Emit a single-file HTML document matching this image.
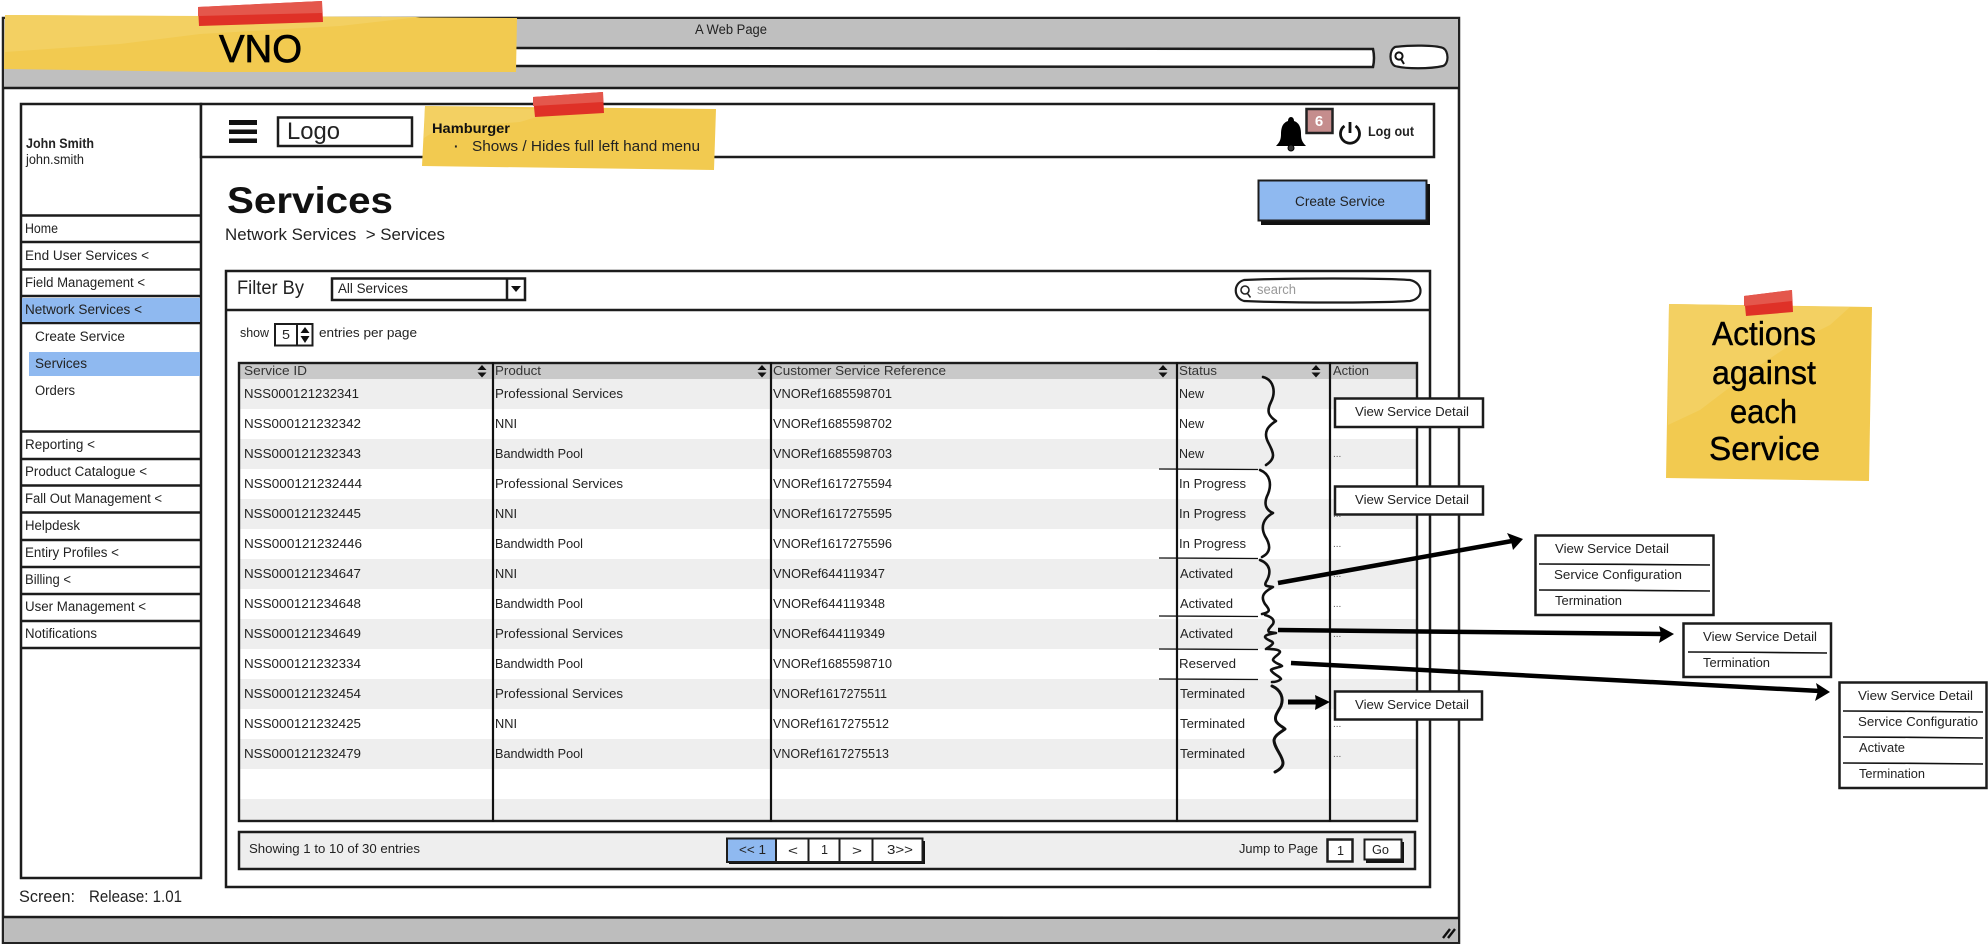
<!DOCTYPE html>
<html><head><meta charset="utf-8"><title>VNO Services</title>
<style>
html,body{margin:0;padding:0;background:#fff;width:1988px;height:944px;overflow:hidden}
svg{display:block}
text{font-family:"Liberation Sans",sans-serif;fill:#222}
.m{font-size:13.5px}
.t{font-size:13px}
.h{font-size:13px;fill:#333}
.d{font-size:10px;fill:#555}
.b{font-weight:bold}
.ln{fill:none;stroke:#1c1c1c;stroke-width:2.5}
.br{fill:none;stroke:#111;stroke-width:2.6;stroke-linejoin:round;stroke-linecap:round}
.sep{fill:none;stroke:#111;stroke-width:1.3}
.box{fill:#fff;stroke:#1c1c1c;stroke-width:2.5}
.ar{fill:none;stroke:#000;stroke-width:4.5}
.st{fill:#000;stroke:#000;stroke-width:.7}
</style></head><body>
<svg width="1988" height="944" viewBox="0 0 1988 944" xmlns="http://www.w3.org/2000/svg">
<rect width="1988" height="944" fill="#fff"/>
<!-- window -->
<rect x="3" y="18" width="1456" height="925" fill="#fff" stroke="#222" stroke-width="2.5"/>
<rect x="4" y="19" width="1454" height="69" fill="#bfbfbf"/>
<path d="M3 88H1459" class="ln"/>
<rect x="4" y="918" width="1454" height="24" fill="#bdbdbd"/>
<path d="M3 917C500 918 1000 916 1459 918" class="ln"/>
<path d="M1443 938l7-9M1448 938l7-9" stroke="#111" stroke-width="2.4" fill="none"/>
<text x="695" y="34" class="m" font-size="13" textLength="72" lengthAdjust="spacingAndGlyphs">A Web Page</text>
<path d="M500 48C800 47 1100 49 1373 49Q1375 58 1373 67C1100 68 800 67 500 66Z" fill="#fff" stroke="#1c1c1c" stroke-width="2.5"/>
<path d="M1395 47C1410 45 1435 45 1443 48C1449 51 1449 64 1443 66C1430 69 1405 69 1395 66C1389 63 1389 50 1395 47Z" fill="#fff" stroke="#1c1c1c" stroke-width="2.2"/>
<circle cx="1399" cy="56" r="3.6" fill="none" stroke="#111" stroke-width="2"/><path d="M1401 59l3 5" stroke="#111" stroke-width="2"/>

<!-- sidebar -->
<rect x="21" y="104" width="180" height="774" class="box"/>
<path d="M21 215.500H201M21 242H201M21 269.500H201M21 296H201M21 323H201M21 431.500H201M21 459H201M21 485.500H201M21 512.500H201M21 540H201M21 567H201M21 594H201M21 621H201M21 648H201" class="ln"/>
<rect x="22" y="298" width="178" height="24" fill="#8fb9f0"/>
<rect x="29" y="352" width="171" height="24" fill="#8fb9f0"/>
<text x="26" y="148" class="m b" font-size="13" textLength="68" lengthAdjust="spacingAndGlyphs">John Smith</text>
<text x="26" y="164" class="m" textLength="58" lengthAdjust="spacingAndGlyphs">john.smith</text>
<text x="25" y="233" class="m" textLength="33" lengthAdjust="spacingAndGlyphs">Home</text>
<text x="25" y="260" class="m" textLength="124" lengthAdjust="spacingAndGlyphs">End User Services &lt;</text>
<text x="25" y="287" class="m" textLength="120" lengthAdjust="spacingAndGlyphs">Field Management &lt;</text>
<text x="25" y="314" class="m" textLength="117" lengthAdjust="spacingAndGlyphs">Network Services &lt;</text>
<text x="35" y="341" class="m" textLength="90" lengthAdjust="spacingAndGlyphs">Create Service</text>
<text x="35" y="368" class="m" textLength="52" lengthAdjust="spacingAndGlyphs">Services</text>
<text x="35" y="395" class="m" textLength="40" lengthAdjust="spacingAndGlyphs">Orders</text>
<text x="25" y="449" class="m" textLength="70" lengthAdjust="spacingAndGlyphs">Reporting &lt;</text>
<text x="25" y="476" class="m" textLength="122" lengthAdjust="spacingAndGlyphs">Product Catalogue &lt;</text>
<text x="25" y="503" class="m" textLength="137" lengthAdjust="spacingAndGlyphs">Fall Out Management &lt;</text>
<text x="25" y="530" class="m" textLength="55" lengthAdjust="spacingAndGlyphs">Helpdesk</text>
<text x="25" y="557" class="m" textLength="94" lengthAdjust="spacingAndGlyphs">Entiry Profiles &lt;</text>
<text x="25" y="584" class="m" textLength="46" lengthAdjust="spacingAndGlyphs">Billing &lt;</text>
<text x="25" y="611" class="m" textLength="121" lengthAdjust="spacingAndGlyphs">User Management &lt;</text>
<text x="25" y="638" class="m" textLength="72" lengthAdjust="spacingAndGlyphs">Notifications</text>
<text x="19" y="902" font-size="17" textLength="56" lengthAdjust="spacingAndGlyphs">Screen:</text>
<text x="89" y="902" font-size="17" textLength="93" lengthAdjust="spacingAndGlyphs">Release: 1.01</text>

<!-- header -->
<rect x="201" y="104" width="1233" height="53" class="box"/>
<path d="M229 120h28v5h-28zM229 129.500h28v4.500h-28zM229 138.500h28v4.500h-28z" fill="#111"/>
<rect x="278" y="117.500" width="134" height="28.500" class="box"/>
<text x="287" y="139" font-size="24" textLength="53" lengthAdjust="spacingAndGlyphs">Logo</text>
<path d="M1291 117c2 0 3 2 3 4c6 2 7 8 7 13c0 5 1 8 5 12h-30c4-4 5-7 5-12c0-5 1-11 7-13c0-2 1-4 3-4z" fill="#000"/>
<circle cx="1291" cy="148" r="3" fill="#333" stroke="#000"/>
<rect x="1306.500" y="109" width="26" height="24" fill="#c58d8d" stroke="#222" stroke-width="2.5"/>
<text x="1319" y="126" font-size="15" font-weight="bold" text-anchor="middle" style="fill:#fff">6</text>
<path d="M1344.500 126A9.500 9.500 0 1 0 1355.500 126M1350 122V133" fill="none" stroke="#111" stroke-width="2.8"/>
<text x="1368" y="136" class="m b" font-size="13" textLength="46" lengthAdjust="spacingAndGlyphs">Log out</text>

<!-- page heading -->
<text x="227" y="213" font-size="37" font-weight="bold" textLength="166" lengthAdjust="spacingAndGlyphs" style="fill:#111">Services</text>
<text x="225" y="240" font-size="17" textLength="220" lengthAdjust="spacingAndGlyphs" xml:space="preserve">Network Services  &gt; Services</text>
<rect x="1261" y="184" width="169" height="41" fill="#111"/>
<rect x="1258.500" y="180.500" width="168" height="40" fill="#8fb9f0" stroke="#1c1c1c" stroke-width="2"/>
<text x="1295" y="206" class="m" textLength="90" lengthAdjust="spacingAndGlyphs">Create Service</text>

<!-- main panel -->
<rect x="226" y="271" width="1204" height="616" class="box"/>
<path d="M226 310H1431" class="ln"/>
<text x="237" y="294" font-size="19" textLength="67" lengthAdjust="spacingAndGlyphs">Filter By</text>
<rect x="332" y="278.500" width="193" height="21.500" class="box"/>
<path d="M507 278V300" class="ln"/>
<path d="M511 286h10l-5 6z" fill="#111"/>
<text x="338" y="293" class="m" textLength="70" lengthAdjust="spacingAndGlyphs">All Services</text>
<path d="M1244 280C1290 278 1380 278 1410 280C1424 283 1424 299 1410 301C1380 303 1290 303 1244 301C1233 298 1233 283 1244 280Z" fill="#fff" stroke="#1c1c1c" stroke-width="2.2"/>
<circle cx="1245" cy="290" r="4" fill="none" stroke="#222" stroke-width="1.6"/><path d="M1247.500 293.500l3 4" stroke="#222" stroke-width="1.6"/>
<text x="1257" y="294" class="m" font-size="13" textLength="39" lengthAdjust="spacingAndGlyphs" style="fill:#999">search</text>

<text x="240" y="337" class="t" textLength="29" lengthAdjust="spacingAndGlyphs">show</text>
<rect x="275" y="324" width="37.500" height="21.500" fill="#fff" stroke="#1c1c1c" stroke-width="2"/>
<path d="M297 324V345" stroke="#1c1c1c" stroke-width="2"/>
<path d="M300.500 333l4.500-6 4.500 6zM300.500 336h9l-4.500 7z" fill="#111"/>
<text x="282" y="339" class="t" textLength="8" lengthAdjust="spacingAndGlyphs">5</text>
<text x="319" y="337" class="t" textLength="98" lengthAdjust="spacingAndGlyphs">entries per page</text>

<!-- table -->
<rect x="239" y="364" width="1178" height="457" fill="#fff"/>
<rect x="239" y="364" width="1178" height="15" fill="#c9c9c9"/>
<g fill="#eeeeee">
<rect x="239" y="379" width="1178" height="30"/><rect x="239" y="439" width="1178" height="30"/><rect x="239" y="499" width="1178" height="30"/><rect x="239" y="559" width="1178" height="30"/><rect x="239" y="619" width="1178" height="30"/><rect x="239" y="679" width="1178" height="30"/><rect x="239" y="739" width="1178" height="30"/><rect x="239" y="799" width="1178" height="22"/>
</g>
<rect x="239" y="363" width="1178" height="458" fill="none" stroke="#1c1c1c" stroke-width="2.4"/>
<path d="M493 362V822M771 362V822M1177 362V822M1330 362V822" stroke="#111" stroke-width="2.2"/>
<g fill="#111">
<path d="M477.500 370l4.500-5 4.500 5zM477.500 372.500h9l-4.500 5z"/>
<path d="M757.500 370l4.500-5 4.500 5zM757.500 372.500h9l-4.500 5z"/>
<path d="M1158.500 370l4.500-5 4.500 5zM1158.500 372.500h9l-4.500 5z"/>
<path d="M1311.500 370l4.500-5 4.500 5zM1311.500 372.500h9l-4.500 5z"/>
</g>
<text x="244" y="375" class="h" textLength="63" lengthAdjust="spacingAndGlyphs">Service ID</text>
<text x="495" y="375" class="h" textLength="46" lengthAdjust="spacingAndGlyphs">Product</text>
<text x="773" y="375" class="h" textLength="173" lengthAdjust="spacingAndGlyphs">Customer Service Reference</text>
<text x="1179" y="375" class="h" textLength="38" lengthAdjust="spacingAndGlyphs">Status</text>
<text x="1333" y="375" class="h" textLength="36" lengthAdjust="spacingAndGlyphs">Action</text>

<g class="rows">
<text x="244" y="398" class="t" textLength="115" lengthAdjust="spacingAndGlyphs">NSS000121232341</text><text x="495" y="398" class="t" textLength="128" lengthAdjust="spacingAndGlyphs">Professional Services</text><text x="773" y="398" class="t" textLength="119" lengthAdjust="spacingAndGlyphs">VNORef1685598701</text><text x="1179" y="398" class="t" textLength="25" lengthAdjust="spacingAndGlyphs">New</text>
<text x="244" y="428" class="t" textLength="117" lengthAdjust="spacingAndGlyphs">NSS000121232342</text><text x="495" y="428" class="t" textLength="22" lengthAdjust="spacingAndGlyphs">NNI</text><text x="773" y="428" class="t" textLength="119" lengthAdjust="spacingAndGlyphs">VNORef1685598702</text><text x="1179" y="428" class="t" textLength="25" lengthAdjust="spacingAndGlyphs">New</text>
<text x="244" y="458" class="t" textLength="117" lengthAdjust="spacingAndGlyphs">NSS000121232343</text><text x="495" y="458" class="t" textLength="88" lengthAdjust="spacingAndGlyphs">Bandwidth Pool</text><text x="773" y="458" class="t" textLength="119" lengthAdjust="spacingAndGlyphs">VNORef1685598703</text><text x="1179" y="458" class="t" textLength="25" lengthAdjust="spacingAndGlyphs">New</text>
<text x="244" y="488" class="t" textLength="118" lengthAdjust="spacingAndGlyphs">NSS000121232444</text><text x="495" y="488" class="t" textLength="128" lengthAdjust="spacingAndGlyphs">Professional Services</text><text x="773" y="488" class="t" textLength="119" lengthAdjust="spacingAndGlyphs">VNORef1617275594</text><text x="1179" y="488" class="t" textLength="67" lengthAdjust="spacingAndGlyphs">In Progress</text>
<text x="244" y="518" class="t" textLength="117" lengthAdjust="spacingAndGlyphs">NSS000121232445</text><text x="495" y="518" class="t" textLength="22" lengthAdjust="spacingAndGlyphs">NNI</text><text x="773" y="518" class="t" textLength="119" lengthAdjust="spacingAndGlyphs">VNORef1617275595</text><text x="1179" y="518" class="t" textLength="67" lengthAdjust="spacingAndGlyphs">In Progress</text>
<text x="244" y="548" class="t" textLength="118" lengthAdjust="spacingAndGlyphs">NSS000121232446</text><text x="495" y="548" class="t" textLength="88" lengthAdjust="spacingAndGlyphs">Bandwidth Pool</text><text x="773" y="548" class="t" textLength="119" lengthAdjust="spacingAndGlyphs">VNORef1617275596</text><text x="1179" y="548" class="t" textLength="67" lengthAdjust="spacingAndGlyphs">In Progress</text>
<text x="244" y="578" class="t" textLength="117" lengthAdjust="spacingAndGlyphs">NSS000121234647</text><text x="495" y="578" class="t" textLength="22" lengthAdjust="spacingAndGlyphs">NNI</text><text x="773" y="578" class="t" textLength="112" lengthAdjust="spacingAndGlyphs">VNORef644119347</text><text x="1180" y="578" class="t" textLength="53" lengthAdjust="spacingAndGlyphs">Activated</text>
<text x="244" y="608" class="t" textLength="117" lengthAdjust="spacingAndGlyphs">NSS000121234648</text><text x="495" y="608" class="t" textLength="88" lengthAdjust="spacingAndGlyphs">Bandwidth Pool</text><text x="773" y="608" class="t" textLength="112" lengthAdjust="spacingAndGlyphs">VNORef644119348</text><text x="1180" y="608" class="t" textLength="53" lengthAdjust="spacingAndGlyphs">Activated</text>
<text x="244" y="638" class="t" textLength="117" lengthAdjust="spacingAndGlyphs">NSS000121234649</text><text x="495" y="638" class="t" textLength="128" lengthAdjust="spacingAndGlyphs">Professional Services</text><text x="773" y="638" class="t" textLength="112" lengthAdjust="spacingAndGlyphs">VNORef644119349</text><text x="1180" y="638" class="t" textLength="53" lengthAdjust="spacingAndGlyphs">Activated</text>
<text x="244" y="668" class="t" textLength="117" lengthAdjust="spacingAndGlyphs">NSS000121232334</text><text x="495" y="668" class="t" textLength="88" lengthAdjust="spacingAndGlyphs">Bandwidth Pool</text><text x="773" y="668" class="t" textLength="119" lengthAdjust="spacingAndGlyphs">VNORef1685598710</text><text x="1179" y="668" class="t" textLength="57" lengthAdjust="spacingAndGlyphs">Reserved</text>
<text x="244" y="698" class="t" textLength="117" lengthAdjust="spacingAndGlyphs">NSS000121232454</text><text x="495" y="698" class="t" textLength="128" lengthAdjust="spacingAndGlyphs">Professional Services</text><text x="773" y="698" class="t" textLength="114" lengthAdjust="spacingAndGlyphs">VNORef1617275511</text><text x="1180" y="698" class="t" textLength="65" lengthAdjust="spacingAndGlyphs">Terminated</text>
<text x="244" y="728" class="t" textLength="117" lengthAdjust="spacingAndGlyphs">NSS000121232425</text><text x="495" y="728" class="t" textLength="22" lengthAdjust="spacingAndGlyphs">NNI</text><text x="773" y="728" class="t" textLength="116" lengthAdjust="spacingAndGlyphs">VNORef1617275512</text><text x="1180" y="728" class="t" textLength="65" lengthAdjust="spacingAndGlyphs">Terminated</text>
<text x="244" y="758" class="t" textLength="117" lengthAdjust="spacingAndGlyphs">NSS000121232479</text><text x="495" y="758" class="t" textLength="88" lengthAdjust="spacingAndGlyphs">Bandwidth Pool</text><text x="773" y="758" class="t" textLength="116" lengthAdjust="spacingAndGlyphs">VNORef1617275513</text><text x="1180" y="758" class="t" textLength="65" lengthAdjust="spacingAndGlyphs">Terminated</text>
</g>
<g>
<text x="1333" y="457" class="d">...</text><text x="1333" y="517" class="d">...</text><text x="1333" y="547" class="d">...</text><text x="1333" y="577" class="d">...</text><text x="1333" y="607" class="d">...</text><text x="1333" y="637" class="d">...</text><text x="1333" y="667" class="d">...</text><text x="1333" y="727" class="d">...</text><text x="1333" y="757" class="d">...</text>
</g>

<!-- status separators -->
<path d="M1159 469C1190 469 1230 469.500 1258 469.500M1159 558C1190 558 1230 558.500 1258 558.500M1159 616C1190 616 1230 616.500 1258 616.500M1159 649C1190 649 1230 649.500 1258 649.500M1159 679C1190 679 1230 679.500 1258 679.500" class="sep"/>
<!-- braces -->
<path d="M1263 377C1274 380 1276 392 1271 402C1266 412 1269 416 1276 421C1268 426 1263 432 1268 442C1273 452 1277 458 1266 465" class="br"/>
<path d="M1260 470C1270 474 1272 484 1268 494C1263 504 1266 510 1273 513C1264 518 1260 526 1265 536C1270 544 1272 552 1262 557" class="br"/>
<path d="M1260 560C1270 564 1272 572 1266 582C1264 586 1266 586 1273 587C1264 592 1260 596 1265 604C1270 610 1271 612 1262 614" class="br"/>
<path d="M1265 615C1272 617 1275 620 1273 624C1270 628 1267 630 1269 632L1276 633C1270 634 1265 635 1265 637C1266 640 1273 641 1273 643C1272 646 1268 647 1266 649" class="br"/>
<path d="M1268 649C1275 649 1280 650 1280 652C1279 655 1273 657 1273 660C1274 663 1280 664 1282 666C1278 668 1272 668 1271 670C1272 674 1280 676 1281 679C1279 681 1275 682 1272 682" class="br"/>
<path d="M1272 686C1281 690 1284 698 1281 706C1278 712 1274 716 1276 721C1278 725 1283 727 1285 729C1281 732 1275 735 1274 740C1274 748 1283 756 1283 763C1283 767 1279 770 1275 772" class="br" style="stroke-width:3"/>

<!-- popups -->
<rect x="1335" y="398.500" width="148" height="28.500" class="box"/>
<text x="1355" y="416" class="t" textLength="114" lengthAdjust="spacingAndGlyphs">View Service Detail</text>
<rect x="1335" y="486.500" width="148" height="28" class="box"/>
<text x="1355" y="504" class="t" textLength="114" lengthAdjust="spacingAndGlyphs">View Service Detail</text>
<rect x="1335" y="691.500" width="147" height="28" class="box"/>
<text x="1355" y="709" class="t" textLength="114" lengthAdjust="spacingAndGlyphs">View Service Detail</text>

<rect x="1535.500" y="535.500" width="178" height="79.500" class="box"/>
<path d="M1539 564C1590 564 1660 564.500 1710 565M1539 590C1590 590 1660 590.500 1710 591" class="sep" style="stroke-width:1.6"/>
<text x="1555" y="553" class="t" textLength="114" lengthAdjust="spacingAndGlyphs">View Service Detail</text>
<text x="1554" y="579" class="t" textLength="128" lengthAdjust="spacingAndGlyphs">Service Configuration</text>
<text x="1555" y="605" class="t" textLength="67" lengthAdjust="spacingAndGlyphs">Termination</text>

<rect x="1683.500" y="623.500" width="147.500" height="53.500" class="box"/>
<path d="M1688 652C1730 652 1790 652.500 1827 653" class="sep" style="stroke-width:1.6"/>
<text x="1703" y="641" class="t" textLength="114" lengthAdjust="spacingAndGlyphs">View Service Detail</text>
<text x="1703" y="667" class="t" textLength="67" lengthAdjust="spacingAndGlyphs">Termination</text>

<rect x="1839.500" y="682.500" width="147" height="105.500" class="box"/>
<path d="M1843 711C1880 711 1950 711.500 1983 712M1843 737C1880 737 1950 737.500 1983 738M1843 763C1880 763 1950 763.500 1983 764" class="sep" style="stroke-width:1.6"/>
<text x="1858" y="700" class="t" textLength="115" lengthAdjust="spacingAndGlyphs">View Service Detail</text>
<text x="1858" y="726" class="t" textLength="120" lengthAdjust="spacingAndGlyphs">Service Configuratio</text>
<text x="1859" y="752" class="t" textLength="46" lengthAdjust="spacingAndGlyphs">Activate</text>
<text x="1859" y="778" class="t" textLength="66" lengthAdjust="spacingAndGlyphs">Termination</text>

<!-- arrows -->
<path d="M1278 583L1512 541" class="ar"/>
<path d="M1523 539L1507 533L1511 541L1513 550Z" fill="#000"/>
<path d="M1278 630L1664 634" class="ar"/>
<path d="M1674 634L1659 626L1661 634L1659 643Z" fill="#000"/>
<path d="M1291 663L1820 691" class="ar"/>
<path d="M1830 692L1816 683L1818 691L1815 701Z" fill="#000"/>
<path d="M1288 702L1320 702" class="ar" style="stroke-width:5"/>
<path d="M1330 702L1315 695L1316 702L1315 710Z" fill="#000"/>

<!-- pagination -->
<rect x="239" y="832" width="1176" height="37" fill="#eee" stroke="#1c1c1c" stroke-width="2.5"/>
<text x="249" y="853" class="t" textLength="171" lengthAdjust="spacingAndGlyphs">Showing 1 to 10 of 30 entries</text>
<rect x="729" y="841" width="196" height="23" fill="#111"/>
<rect x="727" y="838.500" width="49" height="23.500" fill="#8fb9f0" stroke="#1c1c1c" stroke-width="2"/>
<rect x="776" y="838.500" width="32.500" height="23.500" fill="#fff" stroke="#1c1c1c" stroke-width="2"/>
<rect x="808.500" y="838.500" width="31" height="23.500" fill="#fff" stroke="#1c1c1c" stroke-width="2"/>
<rect x="839.500" y="838.500" width="33" height="23.500" fill="#fff" stroke="#1c1c1c" stroke-width="2"/>
<rect x="872.500" y="838.500" width="50" height="23.500" fill="#fff" stroke="#1c1c1c" stroke-width="2"/>
<text x="739" y="854" class="t" textLength="27" lengthAdjust="spacingAndGlyphs">&lt;&lt; 1</text>
<text x="788" y="855" class="t" textLength="10" lengthAdjust="spacingAndGlyphs">&lt;</text>
<text x="821" y="854" class="t" textLength="7" lengthAdjust="spacingAndGlyphs">1</text>
<text x="852" y="855" class="t" textLength="10" lengthAdjust="spacingAndGlyphs">&gt;</text>
<text x="887" y="854" class="t" textLength="26" lengthAdjust="spacingAndGlyphs">3&gt;&gt;</text>
<text x="1239" y="853" class="t" textLength="79" lengthAdjust="spacingAndGlyphs">Jump to Page</text>
<rect x="1327.500" y="839.500" width="25" height="22" fill="#fff" stroke="#1c1c1c" stroke-width="2.5"/>
<text x="1337" y="855" class="t" textLength="7" lengthAdjust="spacingAndGlyphs">1</text>
<rect x="1366" y="842" width="38" height="21" fill="#111"/>
<rect x="1364.500" y="839.500" width="37" height="20" fill="#fff" stroke="#1c1c1c" stroke-width="2"/>
<text x="1372" y="854" class="t" textLength="17" lengthAdjust="spacingAndGlyphs">Go</text>

<!-- stickies -->
<polygon points="5,15 517,18 516,72 210,72 4,69" fill="#f2ca50"/>
<polygon points="5,15 420,17 340,26 200,34 120,44 5,52" fill="#f3d062"/>
<polygon points="198,7 322,1 323,22 199,26" fill="#df3127"/>
<polygon points="198,7 322,1 322,13 198,16" fill="#e4574c"/>
<text x="219" y="62" font-size="39" textLength="83" lengthAdjust="spacingAndGlyphs" class="st">VNO</text>

<polygon points="425,106 716,109 714,170 422,166" fill="#f2ca50"/>
<polygon points="425,106 560,110 520,122 440,128 424,138" fill="#f3d062"/>
<polygon points="533,97 603,92 604,113 535,117" fill="#df3127"/>
<polygon points="533,97 603,92 603,102 533,106" fill="#e4574c"/>
<text x="432" y="133" class="m b" font-size="14" textLength="78" lengthAdjust="spacingAndGlyphs" style="fill:#111">Hamburger</text>
<text x="454" y="151" class="m b">·</text>
<text x="472" y="151" font-size="14.500" textLength="228" lengthAdjust="spacingAndGlyphs">Shows / Hides full left hand menu</text>

<polygon points="1669,304 1872,307 1869,481 1666,478" fill="#f2ca50"/>
<polygon points="1669,304 1850,307 1830,325 1790,345 1750,372 1700,410 1668,425" fill="#f3d062"/>
<polygon points="1744,296 1792,290 1793,312 1746,316" fill="#df3127"/>
<polygon points="1744,296 1792,290 1792,301 1744,306" fill="#e4574c"/>
<text x="1712" y="345" font-size="33" textLength="104" lengthAdjust="spacingAndGlyphs" class="st" style="stroke-width:.4">Actions</text>
<text x="1712" y="384" font-size="33" textLength="104" lengthAdjust="spacingAndGlyphs" class="st" style="stroke-width:.4">against</text>
<text x="1730" y="423" font-size="33" textLength="67" lengthAdjust="spacingAndGlyphs" class="st" style="stroke-width:.4">each</text>
<text x="1709" y="460" font-size="33" textLength="111" lengthAdjust="spacingAndGlyphs" class="st" style="stroke-width:.4">Service</text>
</svg>
</body></html>
